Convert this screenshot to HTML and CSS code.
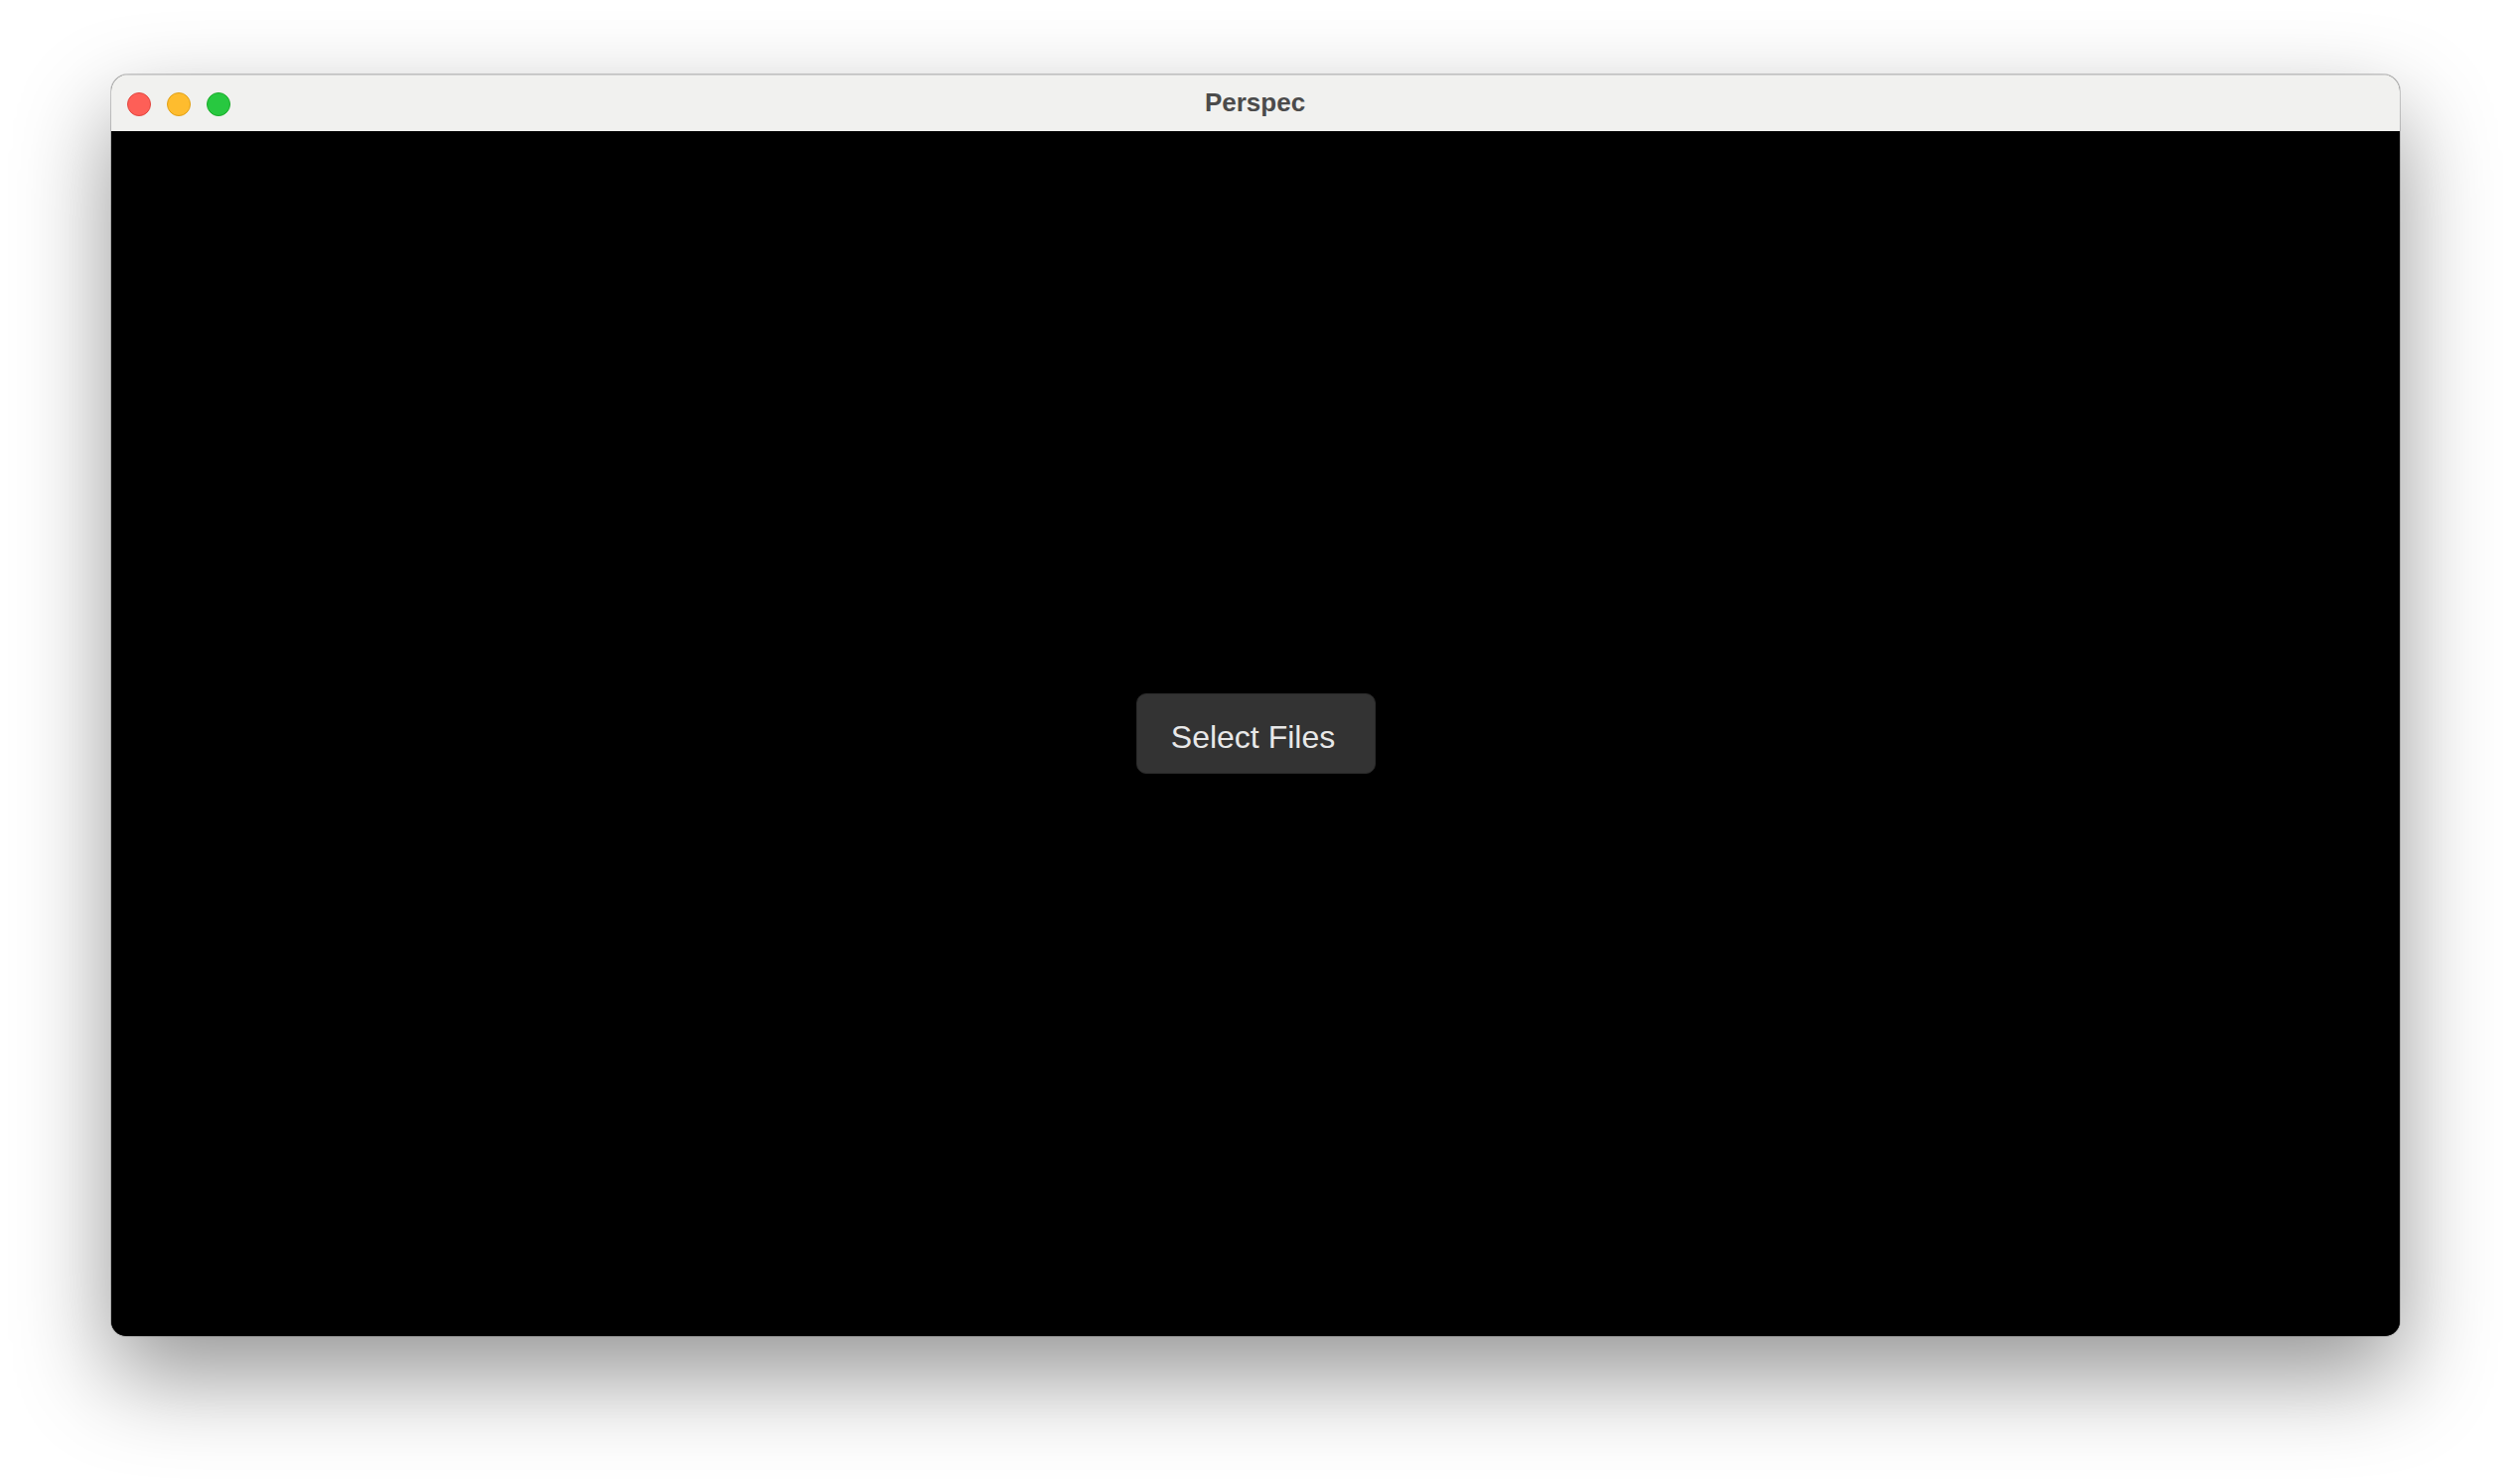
FILE: index.html
```html
<!DOCTYPE html>
<html lang="en">
<head>
<meta charset="utf-8">
<title>Perspec</title>
<link rel="stylesheet" href="styles.css">
</head>
<body>
<div class="window">
  <div class="titlebar">
    <div class="lights">
      <span class="light red"></span>
      <span class="light yellow"></span>
      <span class="light green"></span>
    </div>
    <div class="title">Perspec</div>
  </div>
  <div class="content">
    <button class="select-btn" type="button">Select Files</button>
  </div>
</div>
</body>
</html>
```

FILE: styles.css
```css
html, body {
  margin: 0;
  padding: 0;
  background: #ffffff;
}
body {
  width: 2528px;
  height: 1494px;
  overflow: hidden;
  display: flex;
  justify-content: center;
  align-items: flex-start;
  padding-top: 75px;
  box-sizing: border-box;
  font-family: "Liberation Sans", Arial, sans-serif;
}
.window {
  width: 2304px;
  height: 1270px;
  border-radius: 17px 17px 15px 15px;
  overflow: hidden;
  display: flex;
  flex-direction: column;
  box-shadow: 0 40px 95px rgba(0, 0, 0, 0.42), 0 0 0 1px rgba(0, 0, 0, 0.18);
  background: #000;
}
.titlebar {
  height: 57px;
  flex: 0 0 57px;
  background: #f1f1ef;
  display: grid;
  grid-template-columns: 1fr auto 1fr;
  align-items: center;
  box-sizing: border-box;
  border-top: 1px solid #d2d2d2;
}
.lights {
  display: flex;
  gap: 16px;
  padding-left: 16px;
  padding-top: 1px;
}
.light {
  width: 24px;
  height: 24px;
  border-radius: 50%;
  box-sizing: border-box;
  display: block;
}
.red { background: #fe5f57; border: 1px solid #e2463f; }
.yellow { background: #febc2e; border: 1px solid #e1a116; }
.green { background: #28c840; border: 1px solid #1aab29; }
.title {
  font-size: 26px;
  font-weight: bold;
  color: #4b4b4b;
  padding-bottom: 2px;
  padding-right: 1px;
}
.content {
  flex: 1;
  background: #000;
  display: flex;
  align-items: center;
  justify-content: center;
}
.select-btn {
  width: 241px;
  height: 81px;
  border-radius: 10px;
  border: 1px solid #2a2a2a;
  background: #333333;
  color: #e8e8e8;
  font-family: "Liberation Sans", Arial, sans-serif;
  font-size: 32px;
  padding: 7px 6px 0 0;
  margin-left: 1px;
  cursor: pointer;
}
```
